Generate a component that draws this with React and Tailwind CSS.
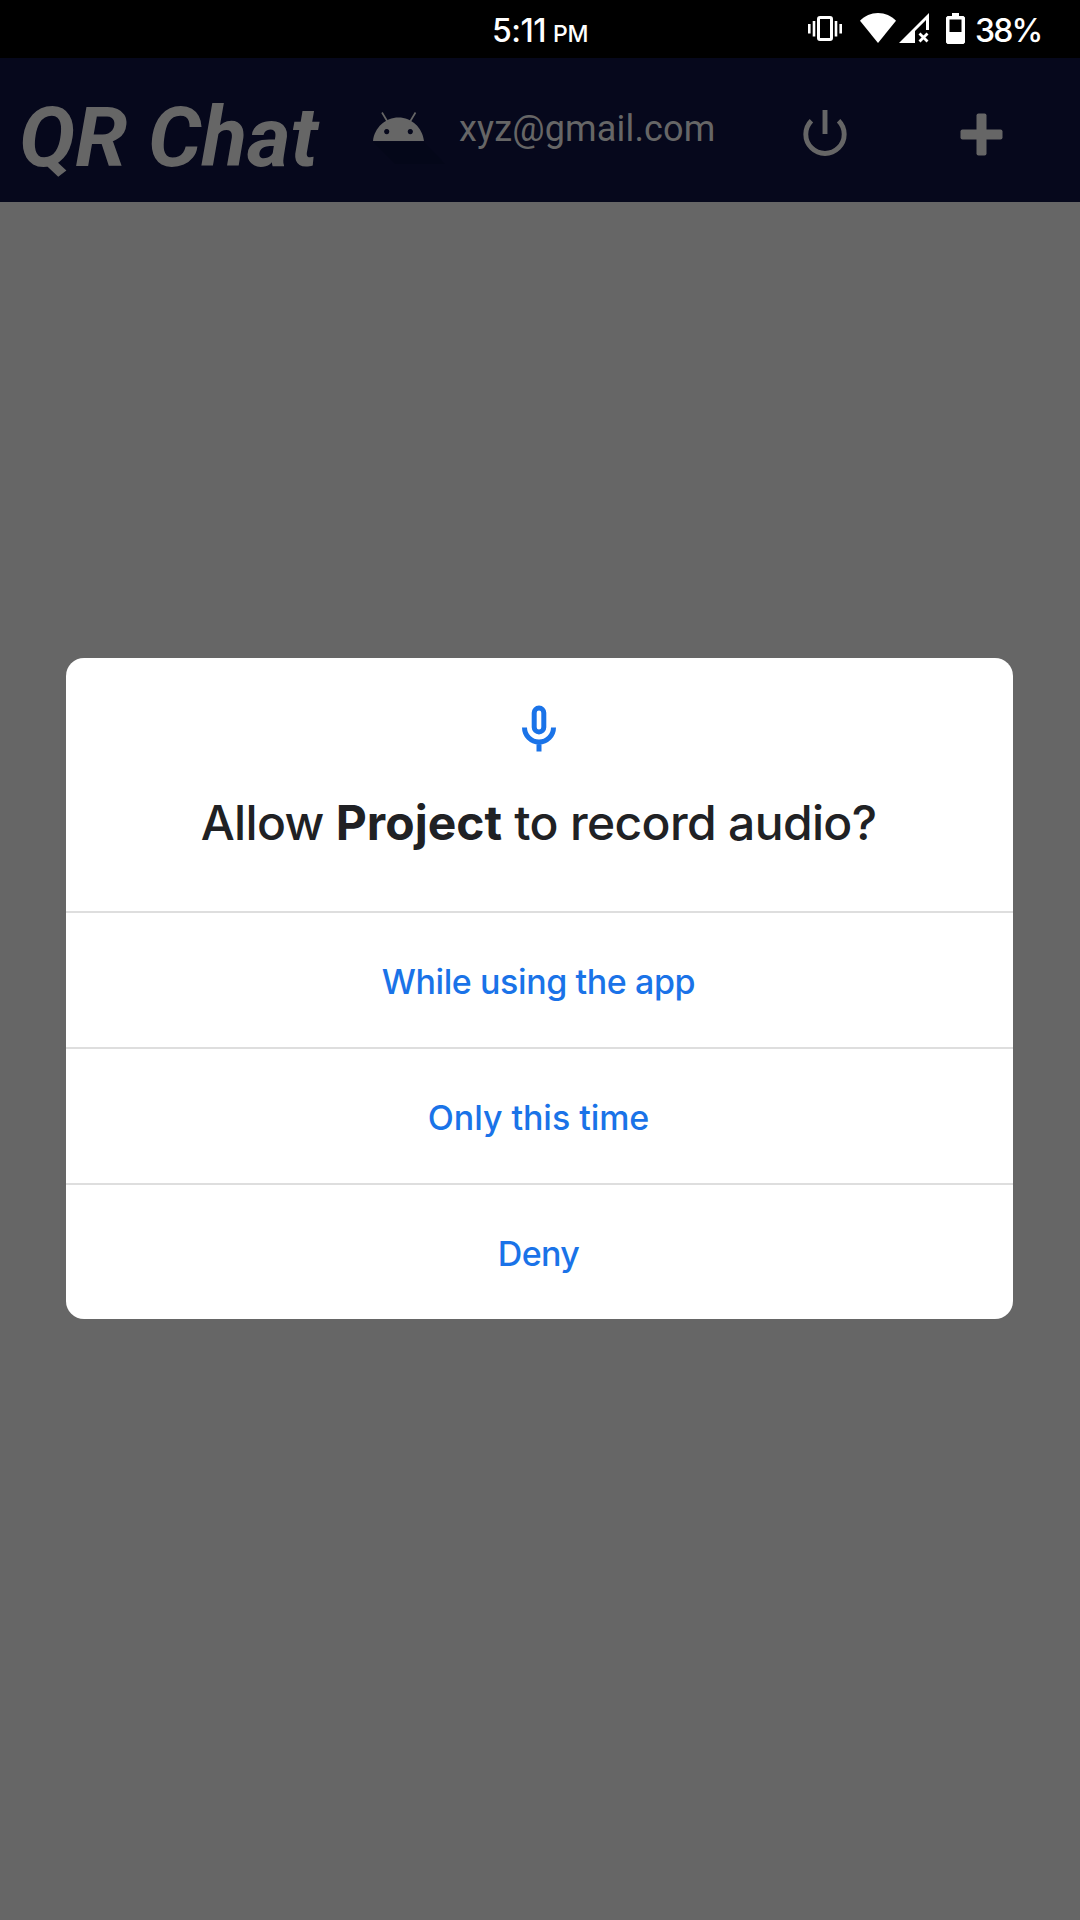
const choices = [
  { label: "While using the app", spacing: "tracking-[-0.4px]" },
  { label: "Only this time", spacing: "tracking-[-0.05px]" },
  { label: "Deny", spacing: "tracking-[-0.6px]" },
];

function StatusBar() {
  return (
    <div className="flex h-[58px] items-start bg-black font-['Inter',sans-serif] font-medium text-white">
      <div className="ml-[492px] mt-[11px] flex w-[316px] items-baseline whitespace-nowrap leading-10">
        <span className="text-[32px] tracking-[-0.5px]">5:11</span>
        <span className="ml-[7px] text-[23px] tracking-[-0.3px]">PM</span>
      </div>
      <svg className="mt-4 h-[25px] w-[34px]" viewBox="0 0 34 25" fill="none">
        <rect x="10.5" y="1.5" width="13" height="22" rx="1.5" stroke="white" strokeWidth="3" />
        <path d="M1.300 8v9.500M6 5v15.500M28 5v15.500M32.700 8v9.500" stroke="white" strokeWidth="2.600" />
      </svg>
      <svg className="ml-[18px] mt-[13px] h-[30px] w-[36px]" viewBox="0 0 36 30" fill="white">
        <path d="M18 30 0 7.700C4.600 3 11 0 18 0s13.400 3 18 7.700Z" />
      </svg>
      <svg className="ml-[3px] mt-[13px] h-[30px] w-[30px]" viewBox="0 0 30 30" fill="white">
        <path d="M0 30 30 0v17h-3V7L16 18v12Z" />
        <path d="m20.500 20.500 8 8m0-8-8 8" stroke="white" strokeWidth="2.800" />
      </svg>
      <svg className="ml-[17px] mt-[13px] h-[31px] w-[19px]" viewBox="0 0 19 31" fill="white">
        <path
          fillRule="evenodd"
          d="M6 0h7v3h4.500L19 4.500v25L17.500 31h-16L0 29.500v-25L1.500 3H6ZM3.500 6.500V19h12V6.500Z"
        />
      </svg>
      <span className="ml-[10px] mt-[11px] text-[32px] leading-10 tracking-[-1.8px]">38%</span>
    </div>
  );
}

function AppHeader() {
  return (
    <header className="flex h-[144px] items-start bg-[#06081c] font-['Roboto',sans-serif] text-[#666666]">
      <h1 className="ml-[19px] mt-[30px] w-[354px] whitespace-nowrap text-[84px] font-bold italic leading-[100px]">
        QR Chat
      </h1>
      <svg className="mt-[54px] h-[52px] w-[72px]" viewBox="0 0 72 52">
        <path d="M0 30h51l21 22H22Z" fill="#040617" opacity=".6" />
        <path d="m9 0.500 6 10M42.500 0.500l-6 10" stroke="#666666" strokeWidth="1.700" />
        <path
          fillRule="evenodd"
          fill="#666666"
          d="M0 29C1.500 15.500 12.500 5.500 25.500 5.500S49.500 15.500 51 29ZM13.700 17a2.600 2.600 0 1 0 .01 0ZM37.300 17a2.600 2.600 0 1 0 .01 0Z"
        />
      </svg>
      <span className="ml-[14px] mt-[48.500px] w-[344px] whitespace-nowrap text-[36px] leading-[44px] tracking-[0.160px]">
        xyz@gmail.com
      </span>
      <svg className="mt-[52px] h-[46px] w-[44px]" viewBox="0 0 44 46" fill="none" stroke="#666666" strokeWidth="4.900">
        <path d="M22 0v24M8.400 10.700a19.200 19.200 0 1 0 27.200 0" />
      </svg>
      <svg className="ml-[113px] mt-[55px] h-[43px] w-[43px]" viewBox="0 0 43 43" fill="#666666">
        <rect x="16.500" y="0.500" width="10" height="42" rx="2" />
        <rect x="0.500" y="16.500" width="42" height="10" rx="2" />
      </svg>
    </header>
  );
}

function PermissionDialog() {
  return (
    <section className="w-[947px] overflow-hidden rounded-[18px] bg-white font-['Inter',sans-serif]">
      <div className="flex h-[253px] flex-col items-center pr-[2px]">
        <svg className="mt-[47px] h-[47px] w-[34px]" viewBox="0 0 34 47" fill="none" stroke="#1a73e8" strokeWidth="5">
          <rect x="12.200" y="3" width="9.600" height="24" rx="4.800" />
          <path d="M2.500 22.500a14.500 14.500 0 0 0 29 0M17 37v9.500" />
        </svg>
        <h2 className="mt-[41px] whitespace-nowrap text-[48px] font-[450] leading-[60px] tracking-[-0.65px] text-[#202124]">
          Allow <b className="font-[650] tracking-[0px]">Project</b> to record audio?
        </h2>
      </div>
      {choices.map(({ label, spacing }) => (
        <button
          key={label}
          className="flex h-[136px] w-full items-center justify-center border-t-2 border-[#dedede] pr-[2px] pt-[2px] text-[34px] font-medium text-[#1a73e8]"
        >
          <span className={spacing}>{label}</span>
        </button>
      ))}
    </section>
  );
}

export default function App() {
  return (
    <main className="flex h-[1920px] w-[1080px] flex-col overflow-hidden bg-[#666666]">
      <StatusBar />
      <AppHeader />
      <div className="ml-[66px] mt-[456px]">
        <PermissionDialog />
      </div>
    </main>
  );
}
